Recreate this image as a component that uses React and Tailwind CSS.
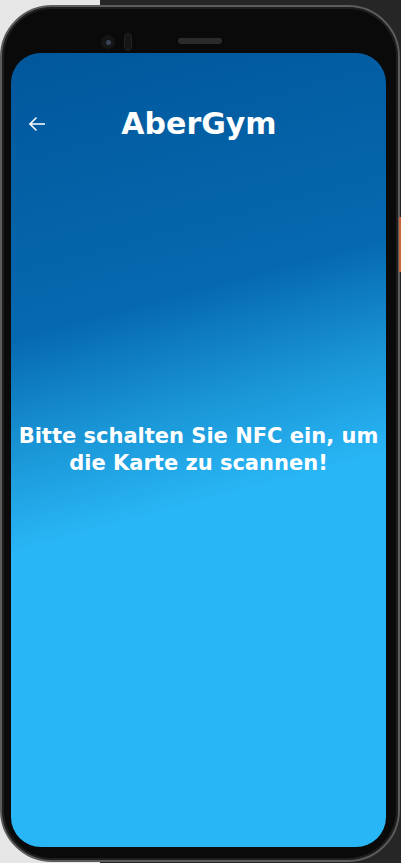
import React from 'react';

function BackArrow() {
  return (
    <svg width="16" height="14" viewBox="0 0 16 14" fill="none" stroke="white" strokeWidth="1.6" strokeLinecap="round" strokeLinejoin="round">
      <path d="M15.5 7H1" />
      <path d="M7 1 1 7l6 6" />
    </svg>
  );
}

export default function App() {
  return (
    <div className="w-[401px] h-[863px] overflow-hidden bg-[linear-gradient(90deg,#e6e6e6_0px,#e6e6e6_100px,#262626_100px)] pt-[5px]">
      <div className="relative w-[400px] h-[857px] rounded-[52px] border-2 border-[#5c5c5c] bg-[#0a0a0a] shadow-[inset_0_0_0_2px_#1e1e1e] flex flex-col pt-[46px] pl-[9px] pr-[12px] pb-[13px]">
        {/* side button */}
        <div className="absolute right-[-3px] top-[210px] w-[2px] h-[55px] bg-[#c8643c]" />
        {/* camera, sensor, speaker */}
        <div className="absolute top-[26px] left-[99px] flex items-center gap-[9px]">
          <div className="w-[14px] h-[14px] rounded-full bg-[#151515] flex items-center justify-center">
            <div className="w-[5px] h-[5px] rounded-full bg-[#3a4456]" />
          </div>
          <div className="w-[8px] h-[18px] rounded-full bg-[#161616] border border-[#222]" />
        </div>
        <div className="absolute top-[31px] left-[176px] w-[44px] h-[6px] rounded-full bg-[#2a2a2a]" />

        <div className="flex-1 rounded-[30px] overflow-hidden bg-[linear-gradient(165deg,#01579b_0%,#0669b0_32%,#1a96d6_45%,#29b6f6_56%,#29b6f6_100%)] flex flex-col text-white font-['DejaVu_Sans',sans-serif]">
          <div className="h-[142px] flex items-center relative shrink-0">
            <div className="absolute left-[18px] top-[64px]">
              <BackArrow />
            </div>
            <h1 className="w-full text-center text-[30px] font-bold leading-none pl-[1px]">AberGym</h1>
          </div>
          <div className="flex-1 flex items-center justify-center pb-[142px]">
            <p className="text-center text-[21px] font-bold leading-[27px] whitespace-nowrap">
              Bitte schalten Sie NFC ein, um<br />die Karte zu scannen!
            </p>
          </div>
        </div>
      </div>
    </div>
  );
}
